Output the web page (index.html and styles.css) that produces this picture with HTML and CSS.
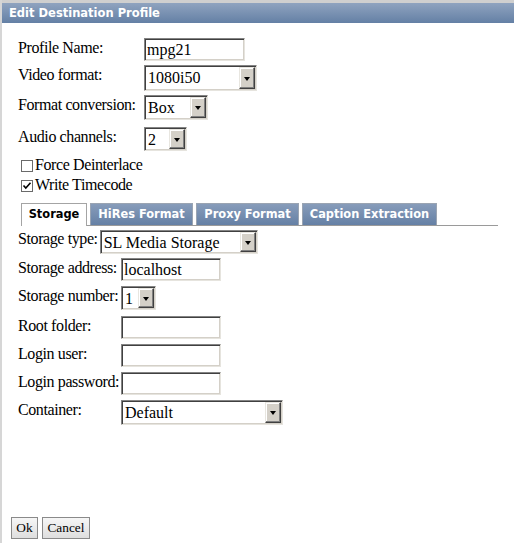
FILE: index.html
```html
<!DOCTYPE html>
<html>
<head>
<meta charset="utf-8">
<link rel="stylesheet" href="styles.css">
</head>
<body>
<div class="dialog">
  <div class="titlebar">Edit Destination Profile</div>
  <div class="content">
    <div class="general">
      <div class="row r-name">
        <span class="lbl lbl-g">Profile Name:</span>
        <span class="txt txt-name">mpg21</span>
      </div>
      <div class="row r-video">
        <span class="lbl lbl-g">Video format:</span>
        <span class="sel sel-video"><span class="val">1080i50</span><span class="btn"><span class="arrow"></span></span></span>
      </div>
      <div class="row r-conv">
        <span class="lbl lbl-g">Format conversion:</span>
        <span class="sel sel-box"><span class="val">Box</span><span class="btn"><span class="arrow"></span></span></span>
      </div>
      <div class="row r-audio">
        <span class="lbl lbl-g">Audio channels:</span>
        <span class="sel sel-audio"><span class="val">2</span><span class="btn"><span class="arrow"></span></span></span>
      </div>
      <div class="chkrow"><span class="chk"></span><span class="chktxt">Force Deinterlace</span></div>
      <div class="chkrow"><span class="chk"><svg width="10" height="10" viewBox="0 0 10 10"><path d="M1.5 4.5 L3.8 7 L8.5 1.8" fill="none" stroke="#000" stroke-width="1.6"/></svg></span><span class="chktxt">Write Timecode</span></div>
    </div>

    <div class="tabs">
      <span class="tab active">Storage</span>
      <span class="tab t-hires">HiRes Format</span>
      <span class="tab t-proxy">Proxy Format</span>
      <span class="tab t-caption">Caption Extraction</span>
    </div>

    <div class="storage">
      <div class="row r-stype">
        <span class="lbl">Storage type:</span>
        <span class="sel sel-stype"><span class="val">SL Media Storage</span><span class="btn"><span class="arrow"></span></span></span>
      </div>
      <div class="row r-s">
        <span class="lbl lbl-s">Storage address:</span>
        <span class="txt txt-s">localhost</span>
      </div>
      <div class="row r-snum">
        <span class="lbl lbl-s">Storage number:</span>
        <span class="sel sel-snum"><span class="val">1</span><span class="btn"><span class="arrow"></span></span></span>
      </div>
      <div class="row r-s">
        <span class="lbl lbl-s">Root folder:</span>
        <span class="txt txt-s"></span>
      </div>
      <div class="row r-s">
        <span class="lbl lbl-s">Login user:</span>
        <span class="txt txt-s"></span>
      </div>
      <div class="row r-s">
        <span class="lbl lbl-s">Login password:</span>
        <span class="txt txt-s"></span>
      </div>
      <div class="row r-cont">
        <span class="lbl lbl-s">Container:</span>
        <span class="sel sel-cont"><span class="val">Default</span><span class="btn"><span class="arrow"></span></span></span>
      </div>
    </div>

    <div class="buttons">
      <button class="b b-ok">Ok</button>
      <button class="b b-cancel">Cancel</button>
    </div>
  </div>
</div>
</body>
</html>
```

FILE: styles.css
```css
html, body {
  margin: 0;
  padding: 0;
  height: 543px;
  overflow: hidden;
}
body {
  background: #ffffff;
  font-family: "Liberation Serif", "Times New Roman", serif;
  font-size: 16px;
  color: #000;
}
.dialog {
  height: 543px;
  box-sizing: border-box;
  border-left: 2px solid #d6d6d6;
  display: flex;
  flex-direction: column;
}
.titlebar {
  height: 20px;
  border-top: 3px solid #cfcfcf;
  background: linear-gradient(#8fa3bf, #6480a5);
  color: #fff;
  font-family: "DejaVu Sans", Verdana, sans-serif;
  font-weight: bold;
  font-size: 11.5px;
  line-height: 20px;
  padding-left: 7px;
}
.content {
  flex: 1;
  display: flex;
  flex-direction: column;
  padding-left: 16px;
}
.general {
  padding-top: 15px;
}
.row {
  display: flex;
  align-items: flex-start;
  line-height: 18px;
}
.lbl {
  display: inline-block;
  padding-top: 1px;
  white-space: nowrap;
  letter-spacing: -0.4px;
}
.lbl-g { width: 126px; flex: none; }
.lbl-s { width: 103px; flex: none; }
.r-name { height: 27px; }
.r-video { height: 30px; }
.r-conv { height: 32px; }
.r-audio { height: 28px; }

.txt {
  box-sizing: border-box;
  display: inline-block;
  flex: none;
  height: 23px;
  border-style: solid;
  border-width: 1px;
  border-color: #848484 #e6e4de #e6e4de #848484;
  box-shadow: inset 1px 1px 0 #404040, inset -1px -1px 0 #d4d0c8;
  background: #fff;
  padding-left: 2px;
  line-height: 21px;
}
.txt-name { width: 101px; }
.txt-s { width: 100px; }

.sel {
  box-sizing: border-box;
  display: inline-flex;
  flex: none;
  align-items: stretch;
  height: 25px;
  border-style: solid;
  border-width: 1px;
  border-color: #848484 #e6e4de #e6e4de #848484;
  box-shadow: inset 1px 1px 0 #404040, inset -1px -1px 0 #d4d0c8;
  background: #fff;
  padding: 1px;
}
.sel .val {
  flex: 1;
  padding-left: 2px;
  line-height: 22px;
  white-space: nowrap;
  overflow: hidden;
}
.sel .btn {
  box-sizing: border-box;
  width: 16px;
  flex: none;
  background: #d4d0c8;
  border-style: solid;
  border-width: 1px;
  border-color: #e8e6e0 #404040 #404040 #e8e6e0;
  box-shadow: inset -1px -1px 0 #808080, inset 1px 1px 0 #fff;
  display: flex;
  align-items: center;
  justify-content: center;
}
.arrow {
  width: 0;
  height: 0;
  border-left: 3.5px solid transparent;
  border-right: 3.5px solid transparent;
  border-top: 4px solid #000;
  margin-top: 1px;
}
.sel-video { width: 113px; height: 26px; }
.sel-box { width: 64px; }
.sel-audio { width: 43px; height: 24px; }
.sel-stype { width: 158px; height: 24px; margin-left: 2px; margin-top: 1px; }
.sel-snum { width: 35px; height: 24px; }
.sel-cont { width: 162px; }

.chkrow {
  display: flex;
  align-items: center;
  height: 20px;
  line-height: 18px;
  padding-left: 3px;
}
.chktxt {
  letter-spacing: -0.4px;
}
.chk {
  box-sizing: border-box;
  width: 12px;
  height: 12px;
  border: 1px solid #6a6a6a;
  background: #fff;
  margin-right: 2px;
  margin-top: 2px;
  display: flex;
  align-items: center;
  justify-content: center;
}

.tabs {
  margin-top: 8px;
  margin-left: 3px;
  width: 477px;
  display: flex;
  gap: 3px;
  align-items: flex-end;
  border-bottom: 1px solid #9a9a9a;
  height: 22px;
}
.tab {
  box-sizing: border-box;
  height: 22px;
  font-family: "DejaVu Sans", Verdana, sans-serif;
  font-weight: bold;
  font-size: 11.4px;
  line-height: 20px;
  color: #fff;
  text-align: center;
  border: 1px solid #9aa4b2;
  border-bottom: none;
  background: linear-gradient(#879cba, #6580a5);
  white-space: nowrap;
  flex: none;
}
.tab.active {
  width: 66px;
  background: #fff;
  color: #000;
  border-color: #a4a4a4;
  height: 23px;
  margin-bottom: -1px;
}
.t-hires { width: 103px; }
.t-proxy { width: 103px; }
.t-caption { width: 135px; }

.storage {
  padding-top: 3px;
}
.r-stype { height: 29px; }
.r-s { height: 28px; }
.r-snum { height: 30px; }
.r-cont { height: 26px; }

.buttons {
  margin-top: auto;
  margin-bottom: 4px;
  margin-left: -7px;
  display: flex;
  gap: 4px;
}
.b {
  box-sizing: border-box;
  height: 22px;
  font-family: "Liberation Serif", "Times New Roman", serif;
  font-size: 13.33px;
  color: #000;
  border: 1px solid #8a8a8a;
  border-radius: 0;
  background: linear-gradient(#f6f6f6, #dedede);
  padding: 0;
}
.b-ok { width: 27px; }
.b-cancel { width: 48px; }
```
